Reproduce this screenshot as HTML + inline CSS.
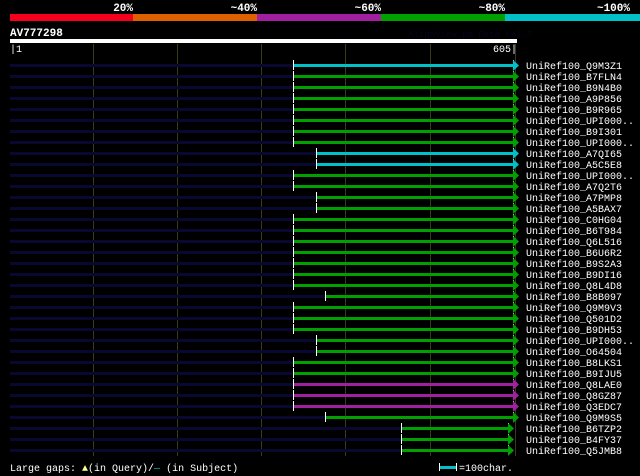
<!DOCTYPE html>
<html><head><meta charset="utf-8"><style>
html,body{margin:0;padding:0;background:#000;width:640px;height:476px;overflow:hidden}
svg{display:block}
text{font-family:"Liberation Mono","DejaVu Sans Mono",monospace;fill:#fff}
</style></head><body>
<svg width="640" height="476" viewBox="0 0 640 476">
<g font-size="11" font-weight="bold" text-anchor="end">
<text x="133" y="11">20%</text><text x="257" y="11">~40%</text><text x="381" y="11">~60%</text><text x="505" y="11">~80%</text><text x="630" y="11">~100%</text>
</g>
<rect x="10" y="14" width="123" height="7" fill="#f4001c"/>
<rect x="133" y="14" width="124" height="7" fill="#e06000"/>
<rect x="257" y="14" width="124" height="7" fill="#a020a0"/>
<rect x="381" y="14" width="124" height="7" fill="#00a000"/>
<rect x="505" y="14" width="135" height="7" fill="#00c0c8"/>
<text x="10" y="36" font-size="11" font-weight="bold">AV777298</text>
<text x="408" y="37" font-size="9" style="fill:#050522">AlignView.pm Beta rel.7</text>
<rect x="10" y="39" width="507" height="4" fill="#fff"/>
<text x="10" y="52" font-size="10">|1</text>
<text x="517" y="52" font-size="10" text-anchor="end">605|</text>
<g stroke="#3a3a18" stroke-width="1">
<line x1="93.5" y1="44" x2="93.5" y2="456"/><line x1="177.5" y1="44" x2="177.5" y2="456"/><line x1="261.5" y1="44" x2="261.5" y2="456"/><line x1="345.5" y1="44" x2="345.5" y2="456"/><line x1="430.5" y1="44" x2="430.5" y2="456"/><line x1="515.5" y1="44" x2="515.5" y2="456"/>
</g>
<g id="rows" font-size="10"></g>
<text x="10" y="471" font-size="10">Large gaps: <tspan style="fill:#ffff80">▲</tspan>(in Query)/<tspan style="fill:#00c0c8">—</tspan> (in Subject)</text>
<rect x="440" y="466" width="16" height="3" fill="#00c0c8"/>
<line x1="439.5" y1="463" x2="439.5" y2="471" stroke="#fff"/>
<line x1="456.5" y1="463" x2="456.5" y2="471" stroke="#fff"/>
<text x="459" y="471" font-size="10">=100char.</text>
</svg>
<script>
var R=[["Q9M3Z1",293,"c"],["B7FLN4",293],["B9N4B0",293],["A9P856",293],["B9R965",293],["UPI000..",293],["B9I301",293],["UPI000..",293],["A7QI65",316,"c"],["A5C5E8",316,"c"],["UPI000..",293],["A7Q2T6",293],["A7PMP8",316],["A5BAX7",316],["C0HG04",293],["B6T984",293],["Q6L516",293],["B6U6R2",293],["B9S2A3",293],["B9DI16",293],["Q8L4D8",293],["B8B097",325],["Q9M9V3",293],["Q501D2",293],["B9DH53",293],["UPI000..",316],["O64504",316],["B8LKS1",293],["B9IJU5",293],["Q8LAE0",293,"p"],["Q8GZ87",293,"p"],["Q3EDC7",293,"p"],["Q9M9S5",325],["B6TZP2",401,"g",508],["B4FY37",401,"g",508],["Q5JMB8",401,"g",508]];
var s="",col={c:"#00c0c8",p:"#a020a0",g:"#00a000"};
R.forEach(function(r,i){var y=65+11*i,st=r[1],e=r[3]||513,c=col[r[2]||"g"];
s+='<rect x="10" y="'+(y-1)+'" width="'+(st-10)+'" height="3" fill="#080830"/>';
s+='<rect x="'+st+'" y="'+(y-1)+'" width="'+(e-st)+'" height="3" fill="'+c+'"/>';
s+='<line x1="'+(st+0.5)+'" y1="'+(y-5)+'" x2="'+(st+0.5)+'" y2="'+(y+5)+'" stroke="#fff"/>';
s+='<line x1="'+(e+0.5)+'" y1="'+(y-5)+'" x2="'+(e+0.5)+'" y2="'+(y+5)+'" stroke="#fff"/>';
s+='<polygon points="'+e+','+(y-5)+' '+(e+6)+','+(y+0.5)+' '+e+','+(y+6)+'" fill="'+c+'"/>';
s+='<text x="526" y="'+(y+4)+'">UniRef100_'+r[0]+'</text>';});
document.getElementById("rows").innerHTML=s;
</script>
</body></html>
